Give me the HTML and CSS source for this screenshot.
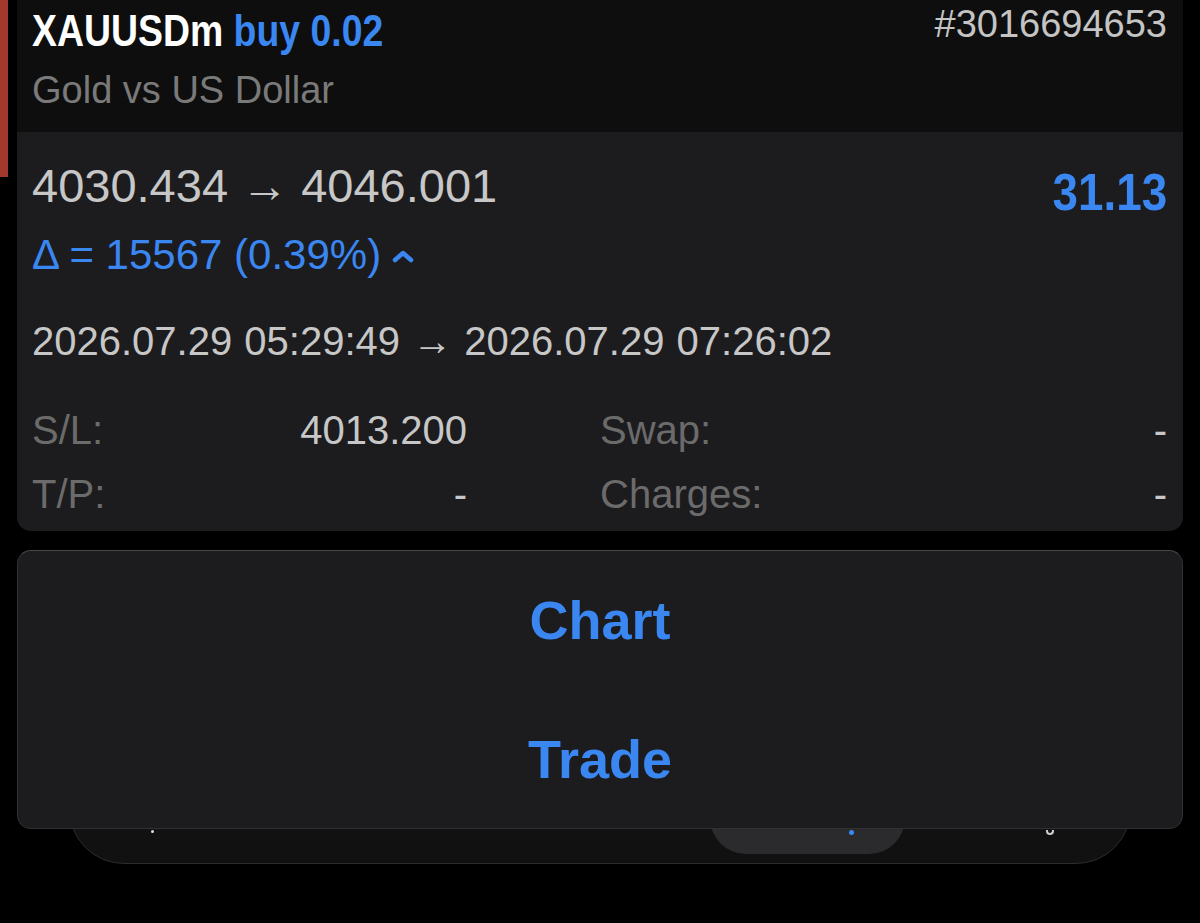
FILE: index.html
```html
<!DOCTYPE html>
<html lang="en">
<head>
    <meta charset="UTF-8">
    <meta name="viewport" content="width=device-width, initial-scale=1.0">
    <title>XAUUSDm position</title>
    <link rel="stylesheet" href="styles.css">
</head>
<body>
    <div class="screen">
        <!-- red edge of the row behind the popup -->
        <span class="edge"></span>

        <article class="position">
            <header class="position-head">
                <div class="head-row">
                    <h1 class="symbol">XAUUSDm <span class="side">buy 0.02</span></h1>
                    <span class="ticket">#3016694653</span>
                </div>
                <p class="desc">Gold vs US Dollar</p>
            </header>

            <section class="position-body">
                <div class="price-row">
                    <span class="prices">4030.434 &rarr; 4046.001</span>
                    <span class="profit">31.13</span>
                </div>
                <div class="delta">
                    &Delta; = 15567 (0.39%)
                    <svg class="chevron" width="24" height="16" viewBox="0 0 24 16">
                        <path d="M4 12 L12 5 L20 12" fill="none" stroke="currentColor" stroke-width="4.5" stroke-linecap="round" stroke-linejoin="round"/>
                    </svg>
                </div>
                <div class="times">2026.07.29 05:29:49 &rarr; 2026.07.29 07:26:02</div>

                <dl class="details">
                    <div class="pair"><dt>S/L:</dt><dd>4013.200</dd></div>
                    <div class="pair"><dt>Swap:</dt><dd>-</dd></div>
                    <div class="pair"><dt>T/P:</dt><dd>-</dd></div>
                    <div class="pair"><dt>Charges:</dt><dd>-</dd></div>
                </dl>
            </section>
        </article>

        <div class="sheet">
            <button>Chart</button>
            <button>Trade</button>
        </div>

        <!-- tab bar peeking out under the action sheet -->
        <nav class="tabbar">
            <span class="pill"></span>
            <span class="mark mark-left"></span>
            <span class="mark mark-blue"></span>
            <span class="mark mark-right"></span>
        </nav>
    </div>
</body>
</html>
```

FILE: styles.css
```css
*{
    box-sizing: border-box;
}

body{
    margin: 0;
    background-color: #000;
    font-family: 'Liberation Sans', Arial, sans-serif;
    color: #c7c7c7;
}

.screen{
    position: relative;
    width: 1200px;
    height: 923px;
    padding: 0 17px;
    display: flex;
    flex-direction: column;
    overflow: hidden;
}

.edge{
    position: absolute;
    left: 0;
    top: 0;
    width: 8px;
    height: 177px;
    background-color: #a3392d;
}

/* popup card */
.position{
    border-radius: 0 0 14px 14px;
    overflow: hidden;
    background-color: #1c1c1e;
}

.position-head{
    background-color: #0e0e0e;
    height: 132px;
    padding: 2px 16px 0 15px;

    .head-row{
        display: flex;
        justify-content: space-between;
        align-items: flex-start;
    }

    /* narrow bold face: squeeze the bold sans */
    .symbol{
        margin: 4px 0 0;
        font-weight: 700;
        font-size: 44px;
        line-height: 50px;
        color: #fff;
        transform: scaleX(.85);
        transform-origin: left center;
        white-space: nowrap;
    }

    .side{
        color: #3b87f2;
    }

    .ticket{
        font-size: 38px;
        line-height: 44px;
        color: #c4c4c4;
    }

    .desc{
        margin: 12px 0 0;
        font-size: 38px;
        line-height: 44px;
        color: #7a7a7a;
    }
}

.position-body{
    padding: 26px 16px 5px 15px;

    .price-row{
        display: flex;
        justify-content: space-between;
        align-items: flex-start;
    }

    .prices{
        font-size: 47px;
        line-height: 56px;
    }

    .profit{
        margin-top: 6px;
        font-weight: 700;
        font-size: 52px;
        line-height: 56px;
        color: #3b87f2;
        transform: scaleX(.88);
        transform-origin: right center;
    }

    .delta{
        margin-top: 11px;
        font-size: 42px;
        line-height: 48px;
        color: #3b87f2;
        display: flex;
        align-items: center;
        gap: 10px;
    }

    .chevron{
        margin-top: 2px;
    }

    .times{
        margin-top: 39px;
        font-size: 40px;
        line-height: 46px;
        word-spacing: 1px;
    }
}

.details{
    margin: 34px 0 0;
    display: grid;
    grid-template-columns: 435px 567px;
    column-gap: 133px;
    font-size: 40px;
    line-height: 64px;

    .pair{
        display: flex;
        justify-content: space-between;
    }

    dt{
        color: #6b6b6b;
    }

    dd{
        margin: 0;
        color: #c7c7c7;
    }
}

/* action sheet */
.sheet{
    position: relative;
    z-index: 1;
    margin-top: 19px;
    height: 279px;
    display: flex;
    flex-direction: column;
    background-color: #1c1c1e;
    border: 1px solid #303033;
    border-top-color: #48484b;
    border-radius: 14px;

    button{
        flex: 1;
        border: 0;
        background: none;
        font-family: 'Liberation Sans', Arial, sans-serif;
        font-weight: 700;
        font-size: 54px;
        color: #3b87f2;
        cursor: pointer;
    }
}

.tabbar{
    position: relative;
    margin: -48px 52px 0;
    height: 83px;
    background-color: #111112;
    border: 1px solid #2c2c2e;
    border-radius: 0 0 55px 55px;

    .pill{
        position: absolute;
        left: 640px;
        bottom: 9px;
        width: 195px;
        height: 70px;
        border-radius: 0 0 36px 36px;
        background-color: #2b2b2d;
    }

    .mark{
        position: absolute;
        top: 48px;
        width: 5px;
        height: 5px;
        border-radius: 50%;
    }

    .mark-left{
        left: 81px;
        width: 3px;
        height: 3px;
        background-color: #ddd;
    }

    .mark-blue{
        left: 779px;
        background-color: #3b87f2;
    }

    .mark-right{
        left: 976px;
        width: 8px;
        height: 5px;
        border: 2px solid #ccc;
        border-top: 0;
        border-radius: 0 0 5px 5px;
    }
}
```
